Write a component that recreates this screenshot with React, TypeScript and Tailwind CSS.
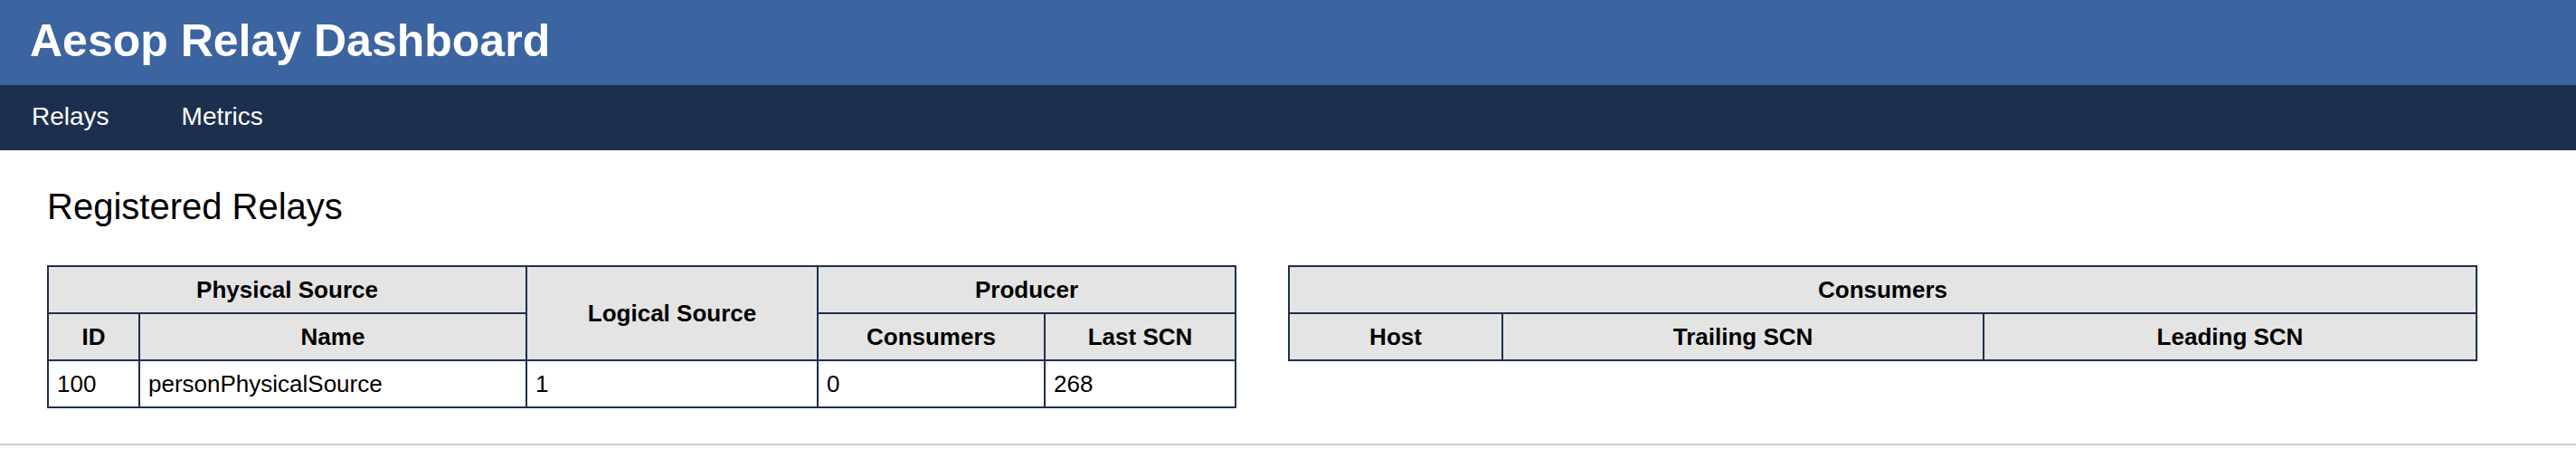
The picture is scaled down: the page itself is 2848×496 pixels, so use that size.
import React from 'react'

const font = { fontFamily: '"Liberation Sans", Arial, sans-serif' }

const Th = ({ children, className = '' }: { children: React.ReactNode; className?: string }) => (
  <div className={`bg-[#e4e4e4] flex items-center justify-center text-[26px] font-bold text-black ${className}`}>
    {children}
  </div>
)

const Td = ({ children }: { children: React.ReactNode }) => (
  <div className="bg-white flex items-center pl-[9px] text-[26px] text-black">{children}</div>
)

const RelaysTable = () => {
  return (
    <div className="grid grid-cols-[99px_426px_320px_249px_209px] grid-rows-[50px_50px_50px] gap-[2px] p-[2px] bg-[#1e2f4f] leading-none">
      <Th className="col-span-2">Physical Source</Th>
      <Th className="row-span-2">Logical Source</Th>
      <Th className="col-span-2">Producer</Th>
      <Th>ID</Th>
      <Th>Name</Th>
      <Th>Consumers</Th>
      <Th>Last SCN</Th>
      <Td>100</Td>
      <Td>personPhysicalSource</Td>
      <Td>1</Td>
      <Td>0</Td>
      <Td>268</Td>
    </div>
  )
}

const ConsumersTable = () => {
  return (
    <div className="grid grid-cols-[234px_530px_543px] grid-rows-[50px_50px] gap-[2px] p-[2px] bg-[#1e2f4f] leading-none self-start">
      <Th className="col-span-3">Consumers</Th>
      <Th>Host</Th>
      <Th>Trailing SCN</Th>
      <Th>Leading SCN</Th>
    </div>
  )
}

const App = () => {
  return (
    <div className="w-full bg-white" style={font}>
      <header className="h-[94px] bg-[#3b64a0] pl-[33px] pt-[20px]">
        <h1 className="text-[50px] leading-none font-bold text-white">Aesop Relay Dashboard</h1>
      </header>
      <nav className="h-[72px] bg-[#1d2f4f] pl-[35px] pt-[21px] flex gap-[80px] text-[28px] leading-none text-white">
        <span>Relays</span>
        <span>Metrics</span>
      </nav>
      <main className="px-[52px] pt-[42px]">
        <h2 className="text-[40px] leading-none text-black">Registered Relays</h2>
        <div className="mt-[45px] flex gap-[57px]">
          <RelaysTable />
          <ConsumersTable />
        </div>
      </main>
      <footer className="mt-[39px] h-[6px] border-t-2 border-[#cccccc]" />
    </div>
  )
}

export default App
